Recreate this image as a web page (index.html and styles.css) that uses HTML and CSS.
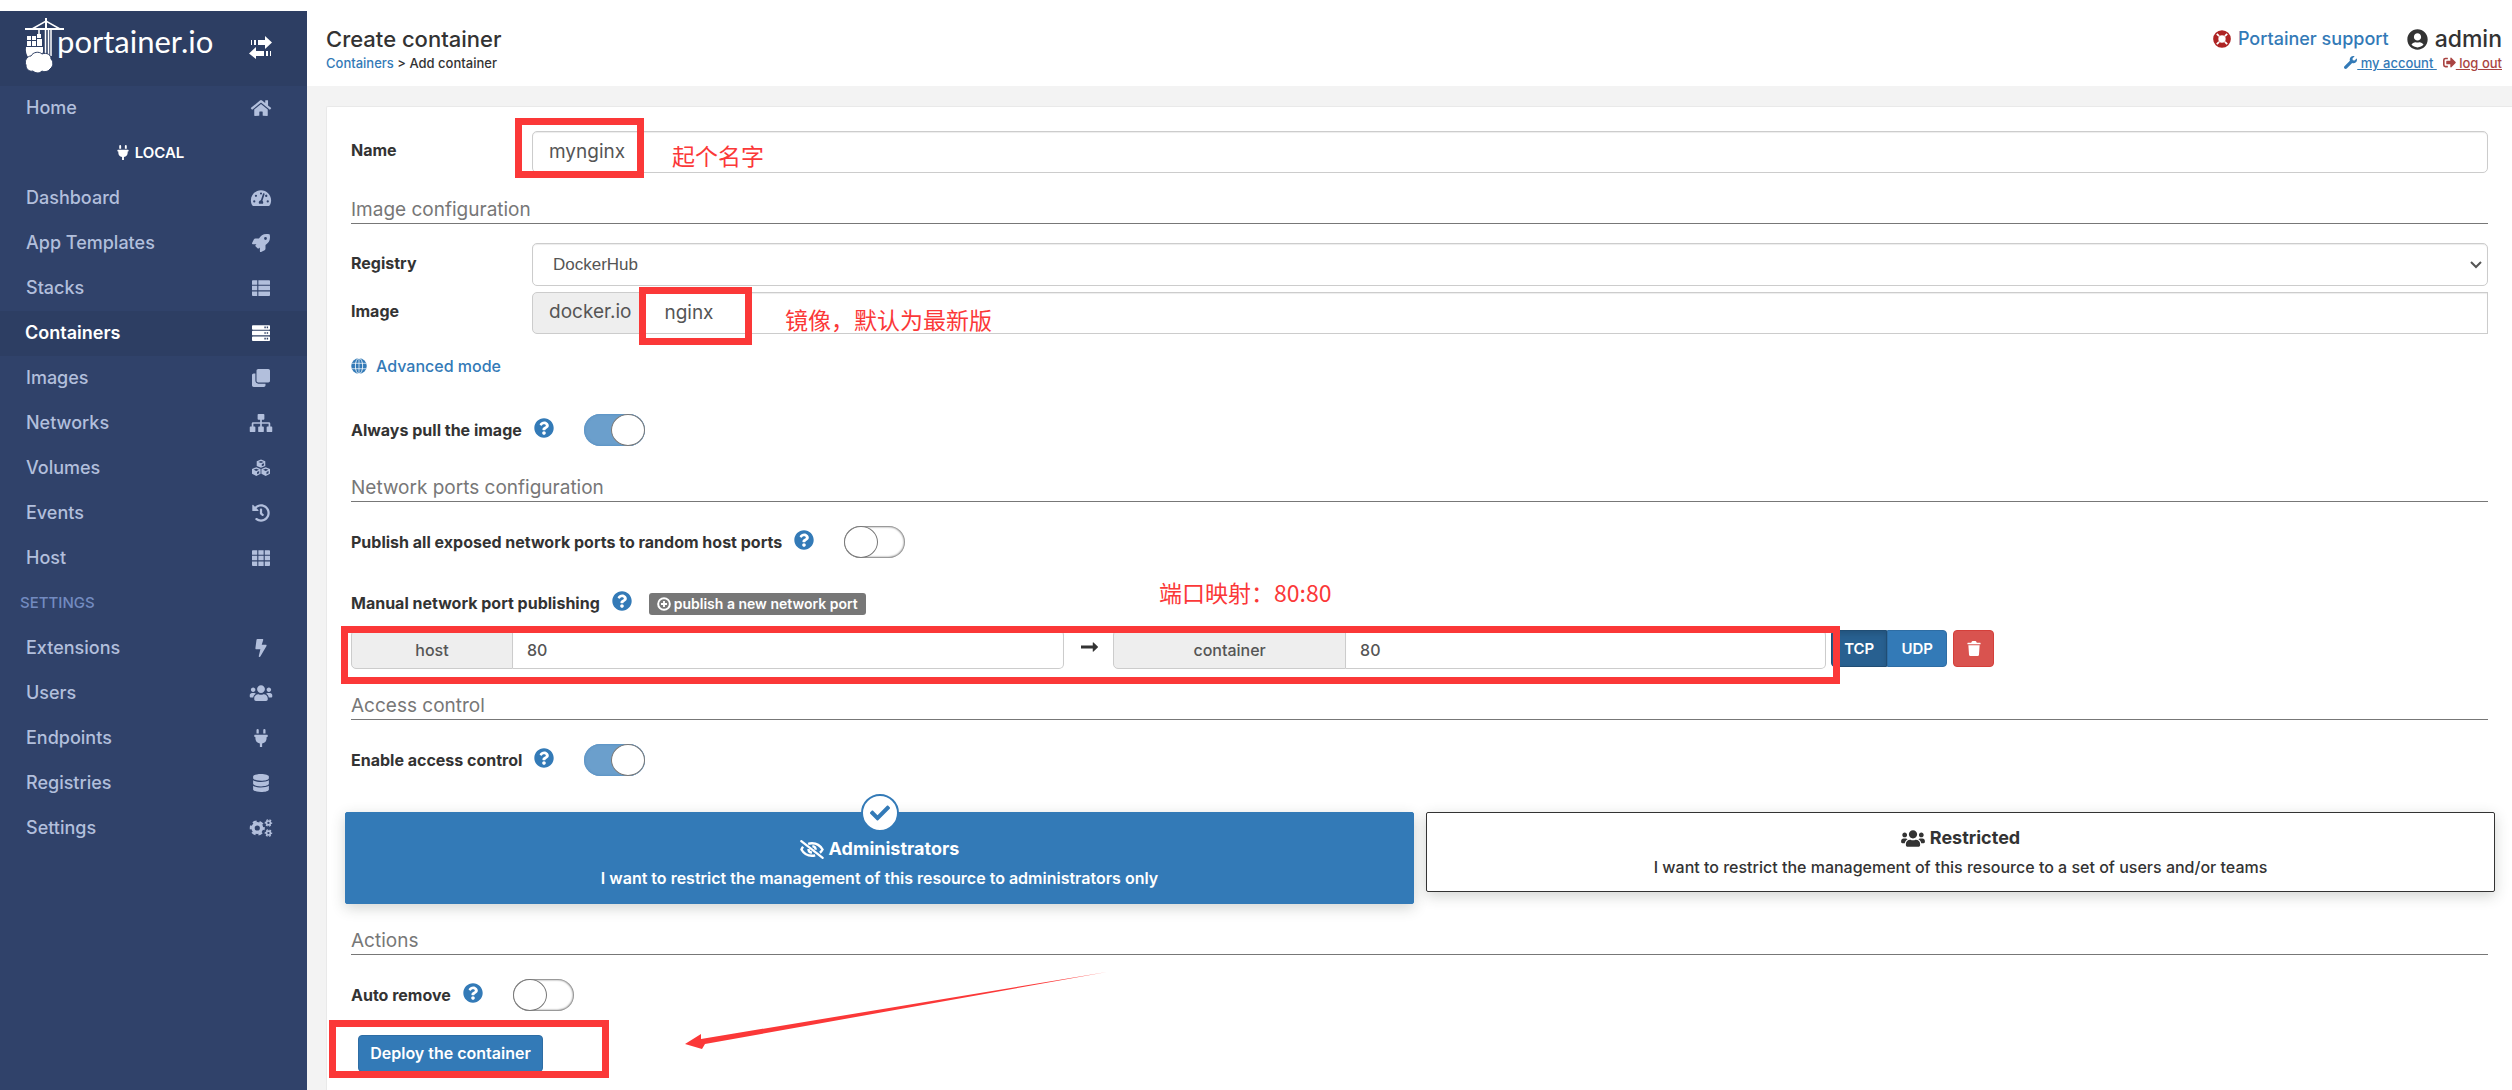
FILE: index.html
```html
<!DOCTYPE html>
<html lang="en">
<head>
<meta charset="utf-8">
<title>Portainer</title>
<link rel="stylesheet" href="styles.css">
</head>
<body>
<svg class="sprite" aria-hidden="true">
  <symbol id="home" viewBox="0 0 576 512"><path d="M280.37 148.26L96 300.11V464a16 16 0 0 0 16 16l112.06-.29a16 16 0 0 0 15.92-16V368a16 16 0 0 1 16-16h64a16 16 0 0 1 16 16v95.64a16 16 0 0 0 16 16.05L464 480a16 16 0 0 0 16-16V300L295.67 148.26a12.19 12.19 0 0 0-15.3 0zM571.6 251.47L488 182.56V44.05a12 12 0 0 0-12-12h-56a12 12 0 0 0-12 12v72.61L318.47 43a48 48 0 0 0-61 0L4.34 251.47a12 12 0 0 0-1.6 16.9l25.5 31A12 12 0 0 0 45.15 301l235.22-193.74a12.19 12.19 0 0 1 15.3 0L530.9 301a12 12 0 0 0 16.9-1.6l25.5-31a12 12 0 0 0-1.7-16.93z"/></symbol>
  <symbol id="plug" viewBox="0 0 384 512"><path d="M320 32a32 32 0 0 0-64 0v96h64zm48 128H16a16 16 0 0 0-16 16v32a16 16 0 0 0 16 16h16v32a160.07 160.07 0 0 0 128 156.8V512h64v-99.2A160.07 160.07 0 0 0 352 256v-32h16a16 16 0 0 0 16-16v-32a16 16 0 0 0-16-16zM128 32a32 32 0 0 0-64 0v96h64z"/></symbol>
  <symbol id="gauge" viewBox="0 0 576 512"><path fill-rule="evenodd" d="M288 32C129 32 0 161 0 320c0 53 14 102 39 145 6 9 16 15 28 15h442c12 0 22-6 28-15 25-43 39-92 39-145C576 161 447 32 288 32zm0 64a30 30 0 1 1 0 60 30 30 0 0 1 0-60zM96 384a32 32 0 1 1 0-64 32 32 0 0 1 0 64zm48-160a32 32 0 1 1 0-64 32 32 0 0 1 0 64zm246-73l-61 184c14 11 23 29 23 49 0 12-3 22-8 32H232c-5-10-8-20-8-32 0-34 27-62 60-64l61-184c10-28 52-13 45 15zm27 68a32 32 0 1 1 30 5c-14 0-25-2-30-5zm63 165a32 32 0 1 1 0-64 32 32 0 0 1 0 64z"/></symbol>
  <symbol id="rocket" viewBox="0 0 512 512"><path d="M505.12 19.09c-1.19-5.53-6.66-11-12.21-12.19C460.72 0 435.51 0 410.41 0 307.18 0 245.27 55.2 199.05 128H94.84c-16.35.02-35.56 11.88-42.89 26.48L2.52 253.3A28.4 28.4 0 0 0 0 264a24 24 0 0 0 24 24h103.82l-22.48 22.47c-11.36 11.36-13 32.26 0 45.25l50.9 50.9c11.16 11.19 32.16 13.16 45.28 0L224 384.16V488a24 24 0 0 0 24 24 28.56 28.56 0 0 0 10.71-2.52l98.73-49.39c14.63-7.3 26.5-26.5 26.5-42.86V312.8c72.6-46.32 128.04-108.41 128.04-211.1.1-25.2.1-50.4-6.86-82.61zM384.04 168a40 40 0 1 1 0-80 40 40 0 0 1 0 80z"/></symbol>
  <symbol id="list" viewBox="0 0 512 512"><path d="M0 56q0-24 24-24h125v128H0zM181 32h307q24 0 24 24v104H181zM0 192h149v128H0zM181 192h331v128H181zM0 352h149v128H24q-24 0-24-24zM181 352h331v104q0 24-24 24H181z"/></symbol>
  <symbol id="server" viewBox="0 0 512 512"><path fill-rule="evenodd" d="M24 32h464q24 0 24 24v80q0 24-24 24H24q-24 0-24-24V56q0-24 24-24zm328 42v44h40V74zm66 0v44h40V74zM24 192h464q24 0 24 24v80q0 24-24 24H24q-24 0-24-24v-80q0-24 24-24zm328 42v44h40v-44zm66 0v44h40v-44zM24 352h464q24 0 24 24v80q0 24-24 24H24q-24 0-24-24v-80q0-24 24-24zm328 42v44h40v-44zm66 0v44h40v-44z"/></symbol>
  <symbol id="clone" viewBox="0 0 512 512"><path d="M464 0c26.51 0 48 21.49 48 48v288c0 26.51-21.49 48-48 48H176c-26.51 0-48-21.49-48-48V48c0-26.51 21.49-48 48-48h288M176 416c-44.112 0-80-35.888-80-80V128H48c-26.51 0-48 21.49-48 48v288c0 26.51 21.49 48 48 48h288c26.51 0 48-21.49 48-48v-48H176z"/></symbol>
  <symbol id="sitemap" viewBox="0 0 640 512"><path d="M248 0h144q24 0 24 24v112q0 24-24 24h-48v72h200q40 0 40 40v80h32q24 0 24 24v112q0 24-24 24H504q-24 0-24-24V376q0-24 24-24h32v-72H344v72h32q24 0 24 24v112q0 24-24 24H264q-24 0-24-24V376q0-24 24-24h32v-72H104v72h32q24 0 24 24v112q0 24-24 24H24q-24 0-24-24V376q0-24 24-24h32v-80q0-40 40-40h200v-72h-48q-24 0-24-24V24q0-24 24-24z"/></symbol>
  <symbol id="cubes" viewBox="0 0 512 512"><path fill-rule="evenodd" d="M256 14l122 48v136l-122 52-122-52V62zm0 44L178 87l78 30 78-30zm22 146l64-27v-58l-64 25zM122 234l122 50v134L122 480 0 418V284zm0 42l-76 30 76 32 76-32zm22 156l60-30v-58l-60 26zM390 234l122 50v134l-122 62-122-62V284zm0 42l-76 30 76 32 76-32zm22 156l60-30v-58l-60 26z"/></symbol>
  <symbol id="history" viewBox="0 0 512 512"><path d="M504 255.531c.253 136.64-111.18 248.372-247.82 248.468-59.015.042-113.223-20.53-155.822-54.911-11.077-8.94-11.905-25.541-1.839-35.607l11.267-11.267c8.609-8.609 22.353-9.551 31.891-1.984C173.062 425.135 212.781 440 256 440c101.705 0 184-82.311 184-184 0-101.705-82.311-184-184-184-48.814 0-93.149 18.969-126.068 49.932l50.754 50.754c10.08 10.08 2.941 27.314-11.313 27.314H24c-8.837 0-16-7.163-16-16V38.627c0-14.254 17.234-21.393 27.314-11.314l49.372 49.372C129.209 34.136 189.552 8 256 8c136.81 0 247.747 110.78 248 247.531zm-180.912 78.784l9.823-12.63c8.138-10.463 6.253-25.542-4.21-33.679L288 256.349V152c0-13.255-10.745-24-24-24h-16c-13.255 0-24 10.745-24 24v135.651l65.409 50.874c10.463 8.137 25.541 6.253 33.679-4.21z"/></symbol>
  <symbol id="grid" viewBox="0 0 512 512"><path d="M24 32h125v128H0V56q0-24 24-24zM181 32h150v128H181zM363 32h125q24 0 24 24v104H363zM0 192h149v128H0zM181 192h150v128H181zM363 192h149v128H363zM0 352h149v128H24q-24 0-24-24zM181 352h150v128H181zM363 352h149v104q0 24-24 24H363z"/></symbol>
  <symbol id="bolt" viewBox="0 0 320 512"><path d="M296 160H180.6l42.6-129.8C227.2 15 215.7 0 200 0H56C44 0 33.8 8.9 32.2 20.8l-32 240C-1.7 275.2 9.5 288 24 288h118.7L96.6 482.5c-3.6 15.2 8 29.5 23.3 29.5 8.4 0 16.4-4.4 20.8-12l176-304c9.3-15.9-2.2-36-20.7-36z"/></symbol>
  <symbol id="users" viewBox="0 0 640 512"><path d="M96 224c35.3 0 64-28.7 64-64s-28.7-64-64-64-64 28.7-64 64 28.7 64 64 64zm448 0c35.3 0 64-28.7 64-64s-28.7-64-64-64-64 28.7-64 64 28.7 64 64 64zm32 32h-64c-17.6 0-33.5 7.1-45.1 18.6 40.3 22.1 68.9 62 75.1 109.4h66c17.7 0 32-14.3 32-32v-32c0-35.3-28.7-64-64-64zm-256 0c61.9 0 112-50.1 112-112S381.9 32 320 32 208 82.1 208 144s50.1 112 112 112zm76.8 32h-8.3c-20.8 10-43.9 16-68.5 16s-47.6-6-68.5-16h-8.3C179.6 288 128 339.6 128 403.2V432c0 26.5 21.5 48 48 48h288c26.5 0 48-21.5 48-48v-28.8c0-63.6-51.6-115.2-115.2-115.2zm-223.7-13.4C161.5 263.1 145.6 256 128 256H64c-35.3 0-64 28.7-64 64v32c0 17.7 14.3 32 32 32h65.9c6.3-47.4 34.9-87.3 75.2-109.4z"/></symbol>
  <symbol id="database" viewBox="0 0 448 512"><path d="M448 73.143v45.714C448 159.143 347.667 192 224 192S0 159.143 0 118.857V73.143C0 32.857 100.333 0 224 0s224 32.857 224 73.143zM448 176v102.857C448 319.143 347.667 352 224 352S0 319.143 0 278.857V176c48.125 33.143 136.208 48.572 224 48.572S399.874 209.143 448 176zm0 160v102.857C448 479.143 347.667 512 224 512S0 479.143 0 438.857V336c48.125 33.143 136.208 48.572 224 48.572S399.874 369.143 448 336z"/></symbol>
  <symbol id="cogs" viewBox="0 0 640 512"><g fill="none" stroke="currentColor"><circle cx="214" cy="256" r="122" stroke-width="96"/><circle cx="214" cy="256" r="184" stroke-width="60" stroke-dasharray="110 83" stroke-dashoffset="55"/><circle cx="532" cy="112" r="56" stroke-width="46"/><circle cx="532" cy="112" r="90" stroke-width="34" stroke-dasharray="54 40" stroke-dashoffset="27"/><circle cx="532" cy="400" r="56" stroke-width="46"/><circle cx="532" cy="400" r="90" stroke-width="34" stroke-dasharray="54 40" stroke-dashoffset="27"/></g></symbol>
  <symbol id="question" viewBox="0 0 512 512"><path d="M504 256c0 136.997-111.043 248-248 248S8 392.997 8 256C8 119.083 119.043 8 256 8s248 111.083 248 248zM262.655 90c-54.497 0-89.255 22.957-116.549 63.758-3.536 5.286-2.353 12.415 2.715 16.258l34.699 26.31c5.205 3.947 12.621 3.008 16.665-2.122 17.864-22.658 30.113-35.797 57.303-35.797 20.429 0 45.698 13.148 45.698 32.958 0 14.976-12.363 22.667-32.534 33.976C247.128 238.528 216 254.941 216 296v4c0 6.627 5.373 12 12 12h56c6.627 0 12-5.373 12-12v-1.333c0-28.462 83.186-29.647 83.186-106.667 0-58.002-60.165-102-116.531-102zM256 338c-25.365 0-46 20.635-46 46 0 25.364 20.635 46 46 46s46-20.636 46-46c0-25.365-20.635-46-46-46z"/></symbol>
  <symbol id="user" viewBox="0 0 496 512"><path d="M248 8C111 8 0 119 0 256s111 248 248 248 248-111 248-248S385 8 248 8zm0 96c48.6 0 88 39.4 88 88s-39.4 88-88 88-88-39.4-88-88 39.4-88 88-88zm0 344c-58.7 0-111.3-26.6-146.5-68.2 18.8-35.4 55.6-59.8 98.5-59.8 2.4 0 4.8.4 7.1 1.1 13 4.2 26.6 6.9 40.9 6.9 14.3 0 28-2.7 40.9-6.9 2.3-.7 4.7-1.1 7.1-1.1 42.9 0 79.7 24.4 98.5 59.8C359.3 421.4 306.7 448 248 448z"/></symbol>
  <symbol id="check" viewBox="0 0 512 512"><path d="M173.898 439.404l-166.4-166.4c-9.997-9.997-9.997-26.206 0-36.204l36.203-36.204c9.997-9.998 26.207-9.998 36.204 0L192 312.69 432.095 72.596c9.997-9.997 26.207-9.997 36.204 0l36.203 36.204c9.997 9.997 9.997 26.206 0 36.204l-294.4 294.401c-9.998 9.997-26.207 9.997-36.204-.001z"/></symbol>
  <symbol id="wrench" viewBox="0 0 512 512"><path d="M507.73 109.1c-2.24-9.03-13.54-12.09-20.12-5.51l-74.36 74.36-67.88-11.31-11.31-67.88 74.36-74.36c6.62-6.62 3.43-17.9-5.66-20.16-47.38-11.74-99.55.91-136.58 37.93-39.64 39.64-50.55 97.1-34.05 147.2L18.74 402.76c-24.99 24.99-24.99 65.51 0 90.5 24.99 24.99 65.51 24.99 90.5 0l213.21-213.21c50.12 16.71 107.47 5.68 147.37-34.22 37.07-37.07 49.7-89.32 37.91-136.73z"/></symbol>
  <symbol id="signout" viewBox="0 0 512 512"><path d="M497 273L329 441c-15 15-41 4.500-41-17v-96H152q-24 0-24-24v-96q0-24 24-24h136V88c0-21.400 25.900-32 41-17l168 168c9.300 9.400 9.300 24.600 0 34zM192 436v-40q0-12-12-12H96q-32 0-32-32V160q0-32 32-32h84q12 0 12-12V76q0-12-12-12H96q-96 0-96 96v192q0 96 96 96h84q12 0 12-12z"/></symbol>
  <symbol id="lifering" viewBox="0 0 512 512"><circle cx="256" cy="256" r="178" fill="none" stroke="currentColor" stroke-width="148"/><path d="M108 108l66 66M338 338l66 66M404 108l-66 66M174 338l-66 66" stroke="#fff" stroke-width="50"/></symbol>
  <symbol id="globe" viewBox="0 0 512 512"><circle cx="256" cy="256" r="248"/><path d="M256 0v512M20 170h472M20 342h472" stroke="#fff" stroke-width="22" fill="none"/><ellipse cx="256" cy="256" rx="116" ry="250" fill="none" stroke="#fff" stroke-width="26"/></symbol>
  <symbol id="plus" viewBox="0 0 512 512"><circle cx="256" cy="256" r="214" fill="none" stroke="currentColor" stroke-width="72"/><path d="M256 146v220M146 256h220" stroke="currentColor" stroke-width="68"/></symbol>
  <symbol id="arrow" viewBox="0 0 448 512"><path d="M0 218h310v-74q0-24 20-8l112 104q12 16 0 32L330 376q-20 16-20-8v-74H0z"/></symbol>
  <symbol id="trash" viewBox="0 0 448 512"><path d="M16 56h112l22-40q8-16 24-16h100q16 0 24 16l22 40h112q16 0 16 16v40H0V72q0-16 16-16zM32 144h384l-22 324q-3 44-48 44H102q-45 0-48-44z"/></symbol>
  <symbol id="eyeslash" viewBox="0 0 640 512"><path fill="none" stroke="currentColor" stroke-width="64" d="M80 180C60 205 45 230 36 256c60 110 160 170 284 170 30 0 60-4 86-12M216 102c32-11 68-16 104-16 124 0 224 62 284 170-16 30-40 62-70 88M224 240c0 52 40 96 96 100M330 164c46 4 90 40 90 100"/><path stroke="currentColor" stroke-width="60" stroke-linecap="round" d="M32 30l576 452"/></symbol>
  <symbol id="exchange" viewBox="0 0 24 24"><path d="M2 5h1v5H2zM5 5h2v5H5zM9 5h7V1l7 6.500-7 6.500v-4H9zM22 16h-1v5h1zM19 16h-2v5h2zM15 16H7v-4l-7 6.500L7 24v-3h8z"/></symbol>
</svg>

<div class="page">
  <aside class="sidebar">
    <div class="brand">
      <a class="logo" href="#" aria-label="portainer.io">
        <svg class="crane" viewBox="0 0 39 55">
          <g fill="none" stroke="#fff"><path stroke-width="2" d="M0 11h39M21 0v12"/><path stroke-width="1.500" d="M7 11L21 3l14 8M14 12v5M20.500 12v26M23.500 12v26M26 12v26"/></g>
          <path fill="#fff" d="M12 16h4v4h-4zM2 18h4v4H2zM7 18h4v4H7zM2 23h4v5H2zM7 23h4v5H7zM12 21h5v7h-5zM1 29h17v5l-3 6H4q-4-4-3-11z"/>
          <path fill="#fff" stroke="#2d3e63" d="M6 38c2-4 8-5 11-2 5-2 9 1 9 5 3 3 2 8-1 10-2 3-6 3-8 2-3 3-7 2-9 0-4 1-7-2-7-6-2-4 1-9 5-9z"/>
        </svg>
        <span>portainer.io</span>
      </a>
      <button class="collapse" aria-label="Toggle sidebar"><svg><use href="#exchange"/></svg></button>
    </div>
    <nav>
      <a href="#">Home<svg><use href="#home"/></svg></a>
      <div class="endpoint"><svg><use href="#plug"/></svg>LOCAL</div>
      <a href="#">Dashboard<svg><use href="#gauge"/></svg></a>
      <a href="#">App Templates<svg><use href="#rocket"/></svg></a>
      <a href="#">Stacks<svg><use href="#list"/></svg></a>
      <a href="#" class="active">Containers<svg><use href="#server"/></svg></a>
      <a href="#">Images<svg><use href="#clone"/></svg></a>
      <a href="#">Networks<svg><use href="#sitemap"/></svg></a>
      <a href="#">Volumes<svg><use href="#cubes"/></svg></a>
      <a href="#">Events<svg><use href="#history"/></svg></a>
      <a href="#">Host<svg><use href="#grid"/></svg></a>
      <div class="group">SETTINGS</div>
      <a href="#">Extensions<svg><use href="#bolt"/></svg></a>
      <a href="#">Users<svg><use href="#users"/></svg></a>
      <a href="#">Endpoints<svg><use href="#plug"/></svg></a>
      <a href="#">Registries<svg><use href="#database"/></svg></a>
      <a href="#">Settings<svg><use href="#cogs"/></svg></a>
    </nav>
  </aside>

  <div class="main">
    <header class="topbar">
      <div>
        <h1>Create container</h1>
        <div class="crumbs"><a href="#">Containers</a> &gt; Add container</div>
      </div>
      <div class="account">
        <div class="who">
          <a class="support" href="#"><svg><use href="#lifering"/></svg>Portainer support</a>
          <span class="user"><svg><use href="#user"/></svg>admin</span>
        </div>
        <div class="links">
          <a href="#"><svg><use href="#wrench"/></svg> my account </a>
          <a class="logout" href="#"><svg><use href="#signout"/></svg> log out</a>
        </div>
      </div>
    </header>

    <form class="widget">
      <div class="row name-row">
        <label class="col" for="name">Name</label>
        <input class="field" id="name" type="text" value="mynginx">
        <div class="mark mark-name"></div>
        <div class="note note-name">起个名字</div>
      </div>

      <h2>Image configuration</h2>
      <div class="row registry-row">
        <label class="col" for="registry">Registry</label>
        <div class="select">
          <select class="field" id="registry"><option>DockerHub</option></select>
          <svg viewBox="0 0 12 8"><path d="M1 1l5 5 5-5"/></svg>
        </div>
      </div>
      <div class="row image-row">
        <label class="col" for="image">Image</label>
        <span class="addon">docker.io</span>
        <input class="field joined square" id="image" type="text" value="nginx">
        <div class="mark mark-image"></div>
        <div class="note note-image">镜像，默认为最新版</div>
      </div>
      <a class="advanced" href="#"><svg><use href="#globe"/></svg>Advanced mode</a>
      <div class="row toggle-row">
        <label for="pull">Always pull the image</label><svg class="help"><use href="#question"/></svg>
        <input class="switch" id="pull" type="checkbox" checked>
      </div>

      <h2>Network ports configuration</h2>
      <div class="row toggle-row">
        <label for="publish">Publish all exposed network ports to random host ports</label><svg class="help"><use href="#question"/></svg>
        <input class="switch" id="publish" type="checkbox">
      </div>
      <div class="row manual-row">
        <span class="label">Manual network port publishing</span><svg class="help"><use href="#question"/></svg>
        <button type="button" class="badge"><svg><use href="#plus"/></svg>publish a new network port</button>
        <div class="note note-port">端口映射：80:80</div>
      </div>
      <div class="row port-row">
        <div class="port">
          <label class="addon host" for="host">host</label>
          <input class="field joined" id="host" type="text" value="80">
        </div>
        <svg class="to"><use href="#arrow"/></svg>
        <div class="port">
          <label class="addon container" for="container">container</label>
          <input class="field joined" id="container" type="text" value="80">
        </div>
        <div class="protocol"><button type="button" class="on">TCP</button><button type="button">UDP</button></div>
        <button type="button" class="remove" aria-label="Remove port"><svg><use href="#trash"/></svg></button>
        <div class="mark mark-port"></div>
      </div>

      <h2>Access control</h2>
      <div class="row toggle-row access-row">
        <label for="access">Enable access control</label><svg class="help"><use href="#question"/></svg>
        <input class="switch" id="access" type="checkbox" checked>
      </div>
      <div class="cards">
        <button type="button" class="card selected">
          <span class="tick"><svg><use href="#check"/></svg></span>
          <strong><svg><use href="#eyeslash"/></svg>Administrators</strong>
          <span>I want to restrict the management of this resource to administrators only</span>
        </button>
        <button type="button" class="card">
          <strong><svg><use href="#users"/></svg>Restricted</strong>
          <span>I want to restrict the management of this resource to a set of users and/or teams</span>
        </button>
      </div>

      <h2>Actions</h2>
      <div class="row toggle-row remove-row">
        <label for="autoremove">Auto remove</label><svg class="help"><use href="#question"/></svg>
        <input class="switch" id="autoremove" type="checkbox">
      </div>
      <div class="row deploy-row">
        <button type="button" class="deploy">Deploy the container</button>
        <div class="mark mark-deploy"></div>
        <svg class="pointer" viewBox="0 0 422 78"><path d="M0 72L16 62v5L422 0 20 72l-3 5z"/></svg>
      </div>
    </form>
  </div>
</div>
</body>
</html>
```
FILE: styles.css
```css
* { box-sizing: border-box; }

body {
  margin: 0;
  background: #fff;
  color: #333;
  font: 500 16px/24px Inter, "Noto Sans CJK SC", sans-serif;
}

a { color: #337ab7; text-decoration: none; }
button, input, select { font: inherit; color: inherit; margin: 0; }
button { border: 0; padding: 0; background: none; }
svg { fill: currentColor; flex: none; }
.sprite { position: absolute; width: 0; height: 0; }

.page { display: flex; min-height: 100vh; padding-top: 11px; overflow: hidden; }

/* Sidebar */
.sidebar { flex: none; width: 307px; background: #30426a; }
.brand {
  display: flex;
  align-items: flex-start;
  justify-content: space-between;
  height: 75px;
  padding: 7px 34px 0 25px;
  background: #2d3e63;
  color: #fff;
}
.logo { display: flex; align-items: flex-start; color: #fff; font: 400 31px/46px Lato, sans-serif; }
.crane { width: 39px; height: 55px; margin-right: -7px; }
.collapse { display: flex; margin-top: 17px; }
.collapse svg { width: 24px; height: 24px; }
nav a, .endpoint, .group { display: flex; align-items: center; height: 45px; padding-bottom: 2px; }
nav a { justify-content: space-between; padding: 0 33px 2px 26px; color: #b2bfdc; font-size: 18px; }
nav a svg { width: 26px; height: 18px; }
nav a.active { padding-left: 25px; background: #2d3e63; color: #fff; font-weight: 600; }
.endpoint { justify-content: center; gap: 5px; padding-right: 7px; color: #fff; font-weight: 600; font-size: 15px; }
.endpoint svg { width: 14px; height: 15px; }
.group { padding-left: 20px; color: #738bc0; font-size: 15px; }

/* Header */
.main { flex: 1; min-width: 0; display: flex; flex-direction: column; background: #f3f3f3; }
.topbar {
  display: flex;
  justify-content: space-between;
  height: 75px;
  padding: 14px 10px 0 19px;
  background: #fff;
}
h1 { margin: 0; font-size: 22px; line-height: 28px; font-weight: 500; }
.crumbs { font-size: 13px; line-height: 20px; }
.account { display: flex; flex-direction: column; align-items: flex-end; }
.who { display: flex; align-items: center; gap: 18px; height: 28px; font-size: 23px; }
.who a, .who span { display: flex; align-items: center; gap: 7px; }
.who .support { font-size: 18px; }
.support svg { width: 18px; height: 18px; color: #ae2323; }
.user svg { width: 21px; height: 21px; }
.links { display: flex; gap: 6px; font-size: 13px; line-height: 20px; }
.links a { text-decoration: underline; white-space: pre; }
.links svg { width: 13px; height: 13px; vertical-align: -1px; }
.links .logout { color: #a94442; }

/* Form */
.widget {
  flex: 1;
  margin: 20px 0 0 19px;
  padding: 24px 24px 0;
  border: solid #e9e9e9;
  border-width: 1px 0 0 1px;
  border-radius: 2px 0 0;
  background: #fff;
}
.row { position: relative; display: flex; align-items: center; }
label, .label { font-weight: 700; }
.col { flex: none; width: 181px; padding-bottom: 4px; }
.field {
  flex: 1;
  min-width: 0;
  width: 100%;
  height: 42px;
  padding: 0 16px;
  border: 1px solid #ccc;
  border-radius: 5px;
  background: #fff;
  box-shadow: inset 0 1px 1px rgba(0, 0, 0, .075);
  color: #555;
  font-weight: 500;
}
#name, #image, .image-row .addon { font-size: 19px; font-weight: 400; padding-bottom: 2px; }
.field.joined { border-left: 0; border-radius: 0 5px 5px 0; }
.field.square { border-radius: 0; padding-left: 22px; }
.addon {
  display: flex;
  align-items: center;
  justify-content: center;
  height: 42px;
  padding: 0 10px 0 16px;
  border: 1px solid #ccc;
  border-radius: 5px 0 0 5px;
  background: #eee;
  color: #555;
  font-weight: 500;
}
h2 {
  margin: 21px 0 0;
  height: 30px;
  border-bottom: 1px solid #777;
  color: #777;
  font-size: 19px;
  line-height: 31px;
  font-weight: 400;
}
.registry-row { margin-top: 19px; }
.select { position: relative; flex: 1; }
.select .field { display: block; height: 43px; padding: 0 20px; appearance: none; font: 17px "Liberation Sans", sans-serif; }
.select svg { position: absolute; top: 18px; right: 6px; width: 12px; height: 8px; fill: none; stroke: #555; stroke-width: 2; }
.image-row { margin-top: 6px; }
.advanced { display: flex; align-items: center; gap: 9px; margin-top: 20px; font-size: 16px; }
.advanced svg { width: 16px; height: 16px; }
.toggle-row { height: 32px; margin-top: 36px; }
.help { width: 20px; height: 20px; margin: 0 30px 4px 12px; color: #337ab7; }
.switch {
  appearance: none;
  position: relative;
  width: 61px;
  height: 32px;
  border-radius: 16px;
  background: #fff;
  box-shadow: inset 0 0 2px 1px #777;
}
.switch:checked { background: #6b9fcc; box-shadow: inset 0 0 2px 1px #5d94c5; }
.switch::after {
  content: "";
  position: absolute;
  inset: 0 auto 0 0;
  width: 32px;
  border: 1px solid #777;
  border-radius: 50%;
  background: #fff;
}
.switch:checked::after { inset: 0 0 0 auto; }
.toggle-row + h2 { margin-top: 26px; }
h2 + .toggle-row { margin-top: 24px; }
.manual-row { height: 26px; margin-top: 32px; }
.manual-row .help { margin-right: 17px; }
.badge {
  display: flex;
  align-items: center;
  gap: 3px;
  height: 22px;
  margin-top: 2px;
  padding: 0 8px;
  border-radius: 3px;
  background: #777;
  color: #fff;
  font-size: 14px;
  font-weight: 600;
}
.badge svg { width: 14px; height: 14px; }
.port-row { margin-top: 14px; align-items: flex-start; }
.port { display: flex; flex: 0 0 33.37%; }
.port .field, .port .addon { height: 39px; }
.port .field { padding-left: 14px; }
.port .addon { flex: none; padding: 0; }
.port .host { width: 162px; }
.port .container { width: 233px; }
.to { width: 17px; height: 20px; margin: 7px 15px 0 17px; color: #333; }
.protocol { display: flex; margin: 0 6px 0 5px; height: 37px; color: #fff; font-size: 15px; font-weight: 600; }
.protocol button { width: 60px; background: #337ab7; border: 1px solid #2e6da4; border-radius: 0 4px 4px 0; }
.protocol .on { width: 56px; background: #286090; border-color: #204d74; border-radius: 4px 0 0 4px; box-shadow: inset 0 3px 5px rgba(0, 0, 0, .125); }
.remove { display: flex; align-items: center; justify-content: center; width: 41px; height: 37px; border: 1px solid #d43f3a; border-radius: 4px; background: #d9534f; color: #fff; }
.remove svg { width: 14px; height: 15px; }

/* Ownership cards */
.cards { display: flex; align-items: flex-start; gap: 12px; margin: 36px -7px 0 -6px; }
.card {
  position: relative;
  flex: 1;
  display: flex;
  flex-direction: column;
  align-items: center;
  gap: 5px;
  height: 80px;
  padding-top: 13px;
  border: 1px solid #333;
  border-radius: 2px;
  box-shadow: 0 4px 14px rgba(51, 60, 51, .22);
}
.card strong { display: flex; align-items: center; gap: 5px; font-size: 18px; font-weight: 700; }
.card strong svg { width: 24px; height: 19px; }
.selected { height: 92px; padding-top: 24px; border-color: #337ab7; background: #337ab7; color: #fff; font-weight: 600; }
.tick {
  position: absolute;
  top: -19px;
  left: calc(50% - 19px);
  display: flex;
  align-items: center;
  justify-content: center;
  width: 38px;
  height: 38px;
  border: 2px solid #337ab7;
  border-radius: 50%;
  background: #fff;
  color: #337ab7;
}
.tick svg { width: 20px; height: 20px; }
.cards + h2 { margin-top: 21px; }
.deploy-row { height: 58px; margin: 9px 0 12px; padding-left: 7px; }
.deploy { width: 185px; height: 37px; margin-top: 8px; border: 1px solid #2e6da4; border-radius: 4px; background: #337ab7; color: #fff; font-weight: 600; }

/* Walkthrough marks over the form */
.mark { position: absolute; border: 7px solid #fb3838; pointer-events: none; }
.mark-name { left: 164px; top: -13px; width: 129px; height: 60px; }
.mark-image { left: 288px; top: -5px; width: 113px; height: 58px; }
.mark-port { left: -10px; top: -4px; width: 1499px; height: 58px; }
.mark-deploy { left: -22px; top: 0; width: 280px; height: 58px; }
.note { position: absolute; color: #fb3838; font: 400 23px/32px "Noto Sans CJK SC", sans-serif; white-space: nowrap; }
.note-name { left: 321px; top: 8px; }
.note-image { left: 434px; top: 11px; }
.note-port { left: 808px; top: -14px; }
.pointer { position: absolute; left: 334px; top: -48px; width: 422px; height: 78px; fill: #fb3838; }
```
